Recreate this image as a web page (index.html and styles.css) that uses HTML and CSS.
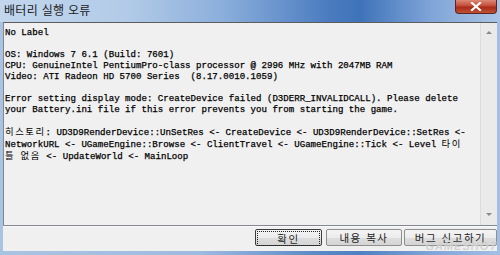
FILE: index.html
```html
<!DOCTYPE html>
<html lang="ko">
<head>
    <meta charset="UTF-8">
    <title>배터리 실행 오류</title>
    <link rel="stylesheet" href="styles.css">
</head>
<body>
    <div class="window">
        <div class="titlebar">
            <span class="title">배터리 실행 오류</span>
            <span class="close">
                <svg width="12" height="9" viewBox="0 0 12 9"><path d="M2 1 L10 8 M10 1 L2 8" stroke="#fff" stroke-width="2.2" stroke-linecap="square"/></svg>
            </span>
        </div>
        <div class="client">
            <div class="textbox">
                <div class="log">No Label

OS: Windows 7 6.1 (Build: 7601)
CPU: GenuineIntel PentiumPro-class processor @ 2996 MHz with 2047MB RAM
Video: ATI Radeon HD 5700 Series  (8.17.0010.1059)

Error setting display mode: CreateDevice failed (D3DERR_INVALIDCALL). Please delete
your Battery.ini file if this error prevents you from starting the game.

<span class="ko">히스토리</span>: UD3D9RenderDevice::UnSetRes &lt;- CreateDevice &lt;- UD3D9RenderDevice::SetRes &lt;-
NetworkURL &lt;- UGameEngine::Browse &lt;- ClientTravel &lt;- UGameEngine::Tick &lt;- Level <span class="ko">타이</span>
<span class="ko">틀</span> <span class="ko">없음</span> &lt;- UpdateWorld &lt;- MainLoop</div>
                <div class="scrollbar">
                    <span class="arrow up"></span>
                    <span class="arrow down"></span>
                </div>
            </div>
            <div class="buttons">
                <button class="btn default"><span class="focus">확인</span></button>
                <button class="btn">내용 복사</button>
                <button class="btn wide">버그 신고하기</button>
            </div>
            <span class="watermark">GAMESHOT</span>
        </div>
    </div>
</body>
</html>
```

FILE: styles.css
```css
body {
    margin: 0;
    width: 500px;
    height: 255px;
    overflow: hidden;
    background: #8fb0da;
    font-family: "Noto Sans CJK KR", sans-serif;
}
.window {
    height: 255px;
    display: flex;
    flex-direction: column;
    background: linear-gradient(to right, #a9c3e2 0%, #9ebbe0 40%, #5e8cc8 62%, #4f80c2 72%, #7fa4d8 86%, #a3bfe4 100%);
}
.titlebar {
    height: 22px;
    display: flex;
    align-items: flex-start;
    padding-left: 4px;
    background: linear-gradient(to right, #c2d7ee 0%, #b3cbe8 25%, #8aaedb 45%, #4a7bbf 66%, #3f73b9 72%, #7fa4d8 86%, #a9c4e6 100%);
}
.title {
    font-size: 12px;
    line-height: 20px;
    color: #1b1b1b;
    letter-spacing: 0.3px;
}
.close {
    margin-left: auto;
    margin-right: 3px;
    width: 42px;
    height: 14px;
    box-sizing: border-box;
    border: 1px solid #5b2520;
    border-top: none;
    border-radius: 0 0 4px 4px;
    background: linear-gradient(to bottom, #dc8a78 0%, #c44a36 45%, #a82a18 55%, #c05236 100%);
    display: flex;
    align-items: center;
    justify-content: center;
}
.client {
    position: relative;
    flex: 1;
    margin: 0 3px 4px 3px;
    background: #f0f0f0;
    display: flex;
    flex-direction: column;
}
.textbox {
    height: 202px;
    border: 1px solid #828790;
    border-top-color: #5c5c5c;
    border-right: none;
    display: flex;
    background: #f0f0f0;
}
.log {
    flex: 1;
    padding: 4px 0 0 1px;
    white-space: pre;
    font-family: "Liberation Mono", "Noto Sans CJK KR", monospace;
    font-size: 9.1px;
    line-height: 11px;
    color: #000;
    -webkit-text-stroke: 0.25px #000;
}
.ko {
    font-family: "Noto Sans CJK KR", sans-serif;
    font-size: 9.4px;
    line-height: 11px;
    letter-spacing: 1.5px;
    -webkit-text-stroke: 0;
}
.scrollbar {
    width: 16px;
    border-left: 1px solid #dcdcdc;
    background: #eaeaea;
    display: flex;
    flex-direction: column;
    justify-content: space-between;
    align-items: center;
    padding: 8px 0 9px;
}
.arrow {
    width: 0;
    height: 0;
    border-left: 3px solid transparent;
    border-right: 3px solid transparent;
}
.arrow.up {
    border-bottom: 3px solid #8a8a8a;
}
.arrow.down {
    border-top: 3px solid #8a8a8a;
}
.buttons {
    flex: 1;
    border-top: 1px solid #fafafa;
    display: flex;
    justify-content: flex-end;
    align-items: flex-start;
    padding-top: 2px;
}
.btn {
    height: 17px;
    width: 76px;
    margin: 0;
    padding: 0;
    border: 1px solid #8e8f8f;
    border-radius: 2px;
    background: linear-gradient(to bottom, #f4f4f4 0%, #ececec 50%, #dedede 51%, #d4d4d4 100%);
    font-family: "Noto Sans CJK KR", sans-serif;
    font-size: 10.5px;
    line-height: 13px;
    color: #222;
    letter-spacing: 1.5px;
}
.btn.default {
    width: 67px;
    border-color: #3c3c3c;
    margin-right: 4px;
    padding: 1px;
}
.btn.wide {
    width: 93px;
    margin-left: 2px;
}
.focus {
    display: block;
    height: 13px;
    border: 1px dotted #222;
}
.watermark {
    position: absolute;
    right: 0;
    bottom: -1px;
    font-family: "Liberation Sans", sans-serif;
    font-weight: bold;
    font-style: italic;
    font-size: 11px;
    line-height: 12px;
    letter-spacing: 1px;
    color: rgba(170, 170, 170, 0.5);
    text-shadow: 0 0 1px rgba(255, 255, 255, 0.8);
}
```
